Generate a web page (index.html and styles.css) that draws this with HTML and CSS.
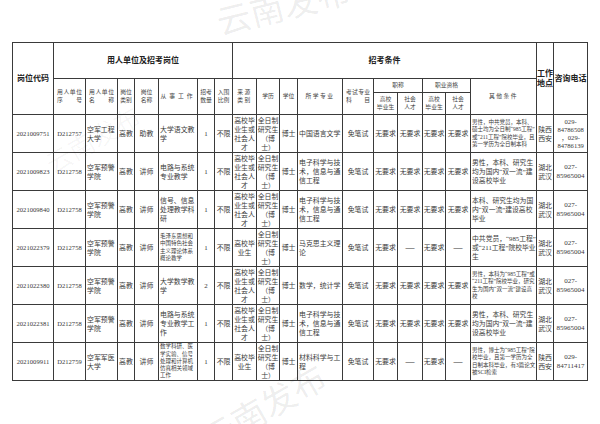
FILE: index.html
```html
<!DOCTYPE html>
<html lang="zh-CN">
<head>
<meta charset="utf-8">
<title>招考岗位表</title>
<link rel="stylesheet" href="styles.css">
</head>
<body>
<div class="page">
  <table class="grid">
    <colgroup>
      <col class="c41"><col class="c32"><col class="c32"><col class="c17"><col class="c24">
      <col class="c39"><col class="c17"><col class="c18"><col class="c24"><col class="c23">
      <col class="c18"><col class="c45"><col class="c31"><col class="c24"><col class="c25">
      <col class="c23"><col class="c25"><col class="c66"><col class="c17"><col class="c34">
    </colgroup>
    <thead>
      <tr class="ha">
        <th rowspan="3" class="big">岗位代码</th>
        <th colspan="7" class="big">用人单位及招考岗位</th>
        <th colspan="10" class="big">招考条件</th>
        <th rowspan="3" class="big tight">工作<br>地点</th>
        <th rowspan="3" class="big">咨询电话</th>
      </tr>
      <tr class="hb">
        <th rowspan="2" class="sub jus">用人单位<br>序号</th>
        <th rowspan="2" class="sub jus">用人单位<br>名称</th>
        <th rowspan="2" class="sub">岗位<br>类别</th>
        <th rowspan="2" class="sub">岗位<br>名称</th>
        <th rowspan="2" class="sub sp">从事工作</th>
        <th rowspan="2" class="sub">招考<br>数量</th>
        <th rowspan="2" class="sub">入围<br>比例</th>
        <th rowspan="2" class="sub sp1">来源<br>类别</th>
        <th rowspan="2" class="sub">学历</th>
        <th rowspan="2" class="sub">学位</th>
        <th rowspan="2" class="sub sp1">所学专业</th>
        <th rowspan="2" class="sub jus">考试专业<br>科目</th>
        <th colspan="2" class="sub">职称</th>
        <th colspan="2" class="sub">职业资格</th>
        <th rowspan="2" class="sub sp1">其他条件</th>
      </tr>
      <tr class="hc">
        <th class="sub">高校<br>毕业生</th>
        <th class="sub">社会<br>人才</th>
        <th class="sub">高校<br>毕业生</th>
        <th class="sub">社会<br>人才</th>
      </tr>
    </thead>
    <tbody>
      <tr>
        <td class="num">2021009751</td><td class="num">D212757</td><td class="l">空军工程大学</td><td>高教</td><td>助教</td>
        <td class="l">大学语文教学</td><td>1</td><td>不限</td><td>高校毕业生或社会人才</td><td>全日制研究生（博士）</td>
        <td>博士</td><td class="l">中国语言文学</td><td>免笔试</td><td>无要求</td><td>无要求</td><td>无要求</td><td>无要求</td>
        <td class="l xs">男性，中共党员，本科、硕士均为全日制“985工程”或“211工程”院校毕业，且第一学历为全日制本科</td>
        <td>陕西西安</td><td class="ph sm">029-<br>84786508<br>，029-<br>84786139</td>
      </tr>
      <tr>
        <td class="num">2021009823</td><td class="num">D212758</td><td class="l">空军预警学院</td><td>高教</td><td>讲师</td>
        <td class="l">电路与系统专业教学</td><td>1</td><td>不限</td><td>高校毕业生或社会人才</td><td>全日制研究生（博士）</td>
        <td>博士</td><td class="l">电子科学与技术，信息与通信工程</td><td>免笔试</td><td>无要求</td><td>无要求</td><td>无要求</td><td>无要求</td>
        <td class="l md">男性，本科、研究生均为国内“双一流”建设高校毕业</td>
        <td>湖北武汉</td><td class="ph">027-<br>85965004</td>
      </tr>
      <tr>
        <td class="num">2021009840</td><td class="num">D212758</td><td class="l">空军预警学院</td><td>高教</td><td>讲师</td>
        <td class="l">信号、信息处理教学科研</td><td>1</td><td>不限</td><td>高校毕业生或社会人才</td><td>全日制研究生（博士）</td>
        <td>博士</td><td class="l">电子科学与技术，信息与通信工程</td><td>免笔试</td><td>无要求</td><td>无要求</td><td>无要求</td><td>无要求</td>
        <td class="l md">本科、研究生均为国内“双一流”建设高校毕业</td>
        <td>湖北武汉</td><td class="ph">027-<br>85965004</td>
      </tr>
      <tr>
        <td class="num">2021022379</td><td class="num">D212758</td><td class="l">空军预警学院</td><td>高教</td><td>讲师</td>
        <td class="l xs">毛泽东思想和中国特色社会主义理论体系概论教学</td><td>1</td><td>不限</td><td>高校毕业生</td><td>全日制研究生（博士）</td>
        <td>博士</td><td class="l">马克思主义理论</td><td>免笔试</td><td>无要求</td><td class="dash">—</td><td>无要求</td><td class="dash">—</td>
        <td class="l md">中共党员，“985工程”或“211工程”院校毕业生</td>
        <td>湖北武汉</td><td class="ph">027-<br>85965004</td>
      </tr>
      <tr>
        <td class="num">2021022380</td><td class="num">D212758</td><td class="l">空军预警学院</td><td>高教</td><td>讲师</td>
        <td class="l">大学数学教学</td><td>2</td><td>不限</td><td>高校毕业生或社会人才</td><td>全日制研究生（博士）</td>
        <td>博士</td><td class="l">数学，统计学</td><td>免笔试</td><td>无要求</td><td>无要求</td><td>无要求</td><td>无要求</td>
        <td class="l xs">男性，本科为“985工程”或“211工程”院校毕业，研究生为国内“双一流”建设高校</td>
        <td>湖北武汉</td><td class="ph">027-<br>85965004</td>
      </tr>
      <tr>
        <td class="num">2021022381</td><td class="num">D212758</td><td class="l">空军预警学院</td><td>高教</td><td>讲师</td>
        <td class="l">电路与系统专业教学工作</td><td>1</td><td>不限</td><td>高校毕业生或社会人才</td><td>全日制研究生（博士）</td>
        <td>博士</td><td class="l">电子科学与技术，信息与通信工程</td><td>免笔试</td><td>无要求</td><td>无要求</td><td>无要求</td><td>无要求</td>
        <td class="l md">男性，本科、研究生均为国内“双一流”建设高校毕业</td>
        <td>湖北武汉</td><td class="ph">027-<br>85965004</td>
      </tr>
      <tr>
        <td class="num">2021009911</td><td class="num">D212759</td><td class="l">空军军医大学</td><td>高教</td><td>讲师</td>
        <td class="l xs">数学科研、医学实验、信号处理和计算机仿真相关领域工作</td><td>1</td><td>不限</td><td>高校毕业生</td><td>全日制研究生（博士）</td>
        <td>博士</td><td class="l">材料科学与工程</td><td>免笔试</td><td>无要求</td><td class="dash">—</td><td>无要求</td><td class="dash">—</td>
        <td class="l xs">男性，博士为“985工程”院校毕业，且第一学历为全日制本科毕业，有3篇论文被SCI检索</td>
        <td>陕西西安</td><td class="ph">029-<br>84711417</td>
      </tr>
    </tbody>
  </table>
  <span class="wm wm-top">云南发布</span>
  <span class="wm wm-bottom">云南发布</span>
  <span class="wm wm-mid">云南发布</span>
</div>
</body>
</html>
```

FILE: styles.css
```css
html, body {
  margin: 0;
  padding: 0;
  background: #ffffff;
}

.page {
  position: relative;
  width: 600px;
  height: 424px;
  overflow: hidden;
  padding: 42px 0 0 12px;
  box-sizing: border-box;
  font-family: "Liberation Serif", "Noto Sans CJK SC", serif;
  color: #333;
}

.grid {
  border-collapse: collapse;
  table-layout: fixed;
  width: 575px;
  border: 1.5px solid #333;
}

.grid th,
.grid td {
  border: 1px solid #3a3a3a;
  padding: 0;
  text-align: center;
  vertical-align: middle;
  overflow: hidden;
  word-break: break-all;
}

.c41 { width: 41px; }
.c32 { width: 32px; }
.c17 { width: 17px; }
.c18 { width: 18px; }
.c23 { width: 23px; }
.c24 { width: 24px; }
.c25 { width: 25px; }
.c31 { width: 31px; }
.c34 { width: 34px; }
.c39 { width: 39px; }
.c45 { width: 45px; }
.c66 { width: 66px; }

.ha { height: 36px; }
.hb { height: 14px; }
.hc { height: 22px; }

.big {
  font-size: 8px;
  line-height: 10px;
  font-weight: bold;
  color: #222;
}

.big.tight {
  font-size: 8px;
}

.sub {
  font-size: 5.8px;
  line-height: 7.5px;
  font-weight: normal;
  color: #444;
}

.sub.jus {
  text-align: justify;
  text-align-last: justify;
  padding: 0 3px;
}

.sub.sp {
  letter-spacing: 3px;
}

.sub.sp1 {
  letter-spacing: 1.5px;
}

.grid tbody tr {
  height: 38px;
}

.grid td {
  font-size: 6.9px;
  line-height: 9px;
  color: #3a3a3a;
}

.grid td.l {
  text-align: left;
  padding-left: 1px;
}

.grid td.num {
  font-size: 6.6px;
}

.grid td.md {
  font-size: 6.8px;
  line-height: 9px;
}

.grid td.xs {
  font-size: 5.5px;
  line-height: 7.3px;
}

.grid td.ph {
  font-size: 7px;
  line-height: 9px;
}

.grid td.ph.sm {
  font-size: 6.6px;
  line-height: 8px;
}

.grid td.dash {
  font-size: 9px;
  font-weight: bold;
}

.wm {
  position: absolute;
  font-family: "Noto Sans CJK SC", sans-serif;
  font-size: 34px;
  color: rgba(0, 0, 0, 0.08);
  white-space: nowrap;
  pointer-events: none;
}

.wm-top {
  left: 215px;
  top: -20px;
  transform: rotate(-14deg);
}

.wm-bottom {
  left: 195px;
  top: 382px;
  transform: rotate(-30deg);
}

.wm-mid {
  left: 40px;
  top: 120px;
  font-size: 26px;
  color: rgba(0, 0, 0, 0.035);
  transform: rotate(-30deg);
}
```
